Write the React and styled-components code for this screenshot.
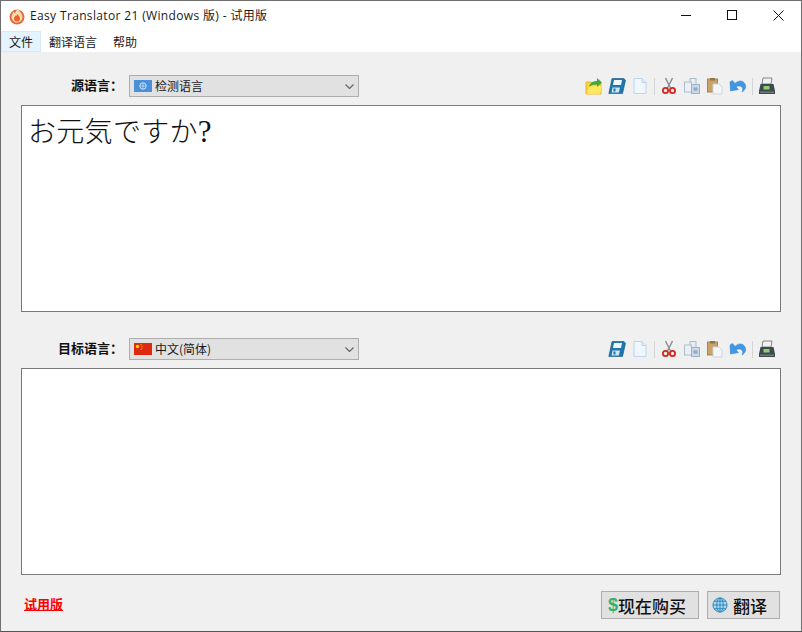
import React from "react";
import styled, { createGlobalStyle } from "styled-components";

const Global = createGlobalStyle`
  html, body { margin: 0; padding: 0; background: #f0f0f0; }
  * { box-sizing: border-box; }
`;
const UI = `"Noto Sans CJK SC", "Noto Sans", sans-serif`;

const Win = styled.div`
  width: 802px; height: 632px; display: flex; flex-direction: column;
  background: #f0f0f0; border: 1px solid #6f6f6f; border-bottom-color: #555; font-family: ${UI}; color: #111; overflow: hidden;
`;
const TitleBar = styled.div`
  height: 30px; flex: none; background: #fff; display: flex; align-items: center; padding-left: 8px;
`;
const TitleText = styled.div`
  margin-left: 5px; font: 12px/16px "Open Sans", "Noto Sans CJK SC", sans-serif; color: #1a1a1a; letter-spacing: 0.35px;
`;
const WinButtons = styled.div`
  margin-left: auto; display: flex; height: 100%;
`;
const WinBtn = styled.div`
  width: 46px; display: flex; align-items: center; justify-content: center; padding-bottom: 2px;
`;
const MenuBar = styled.div`
  height: 21px; flex: none; background: #fff; display: flex; font-size: 12px; line-height: 21px;
`;
const MenuItem = styled.div`
  padding: 0 8px; color: #1a1a1a;
  background: ${p => p.$active ? "#e5f3ff" : "transparent"};
  box-shadow: ${p => p.$active ? "inset 0 0 0 1px #d5e9f9" : "none"};
`;
const Content = styled.div`
  flex: 1; display: flex; flex-direction: column; padding: 23px 20px 0;
`;
const LangRow = styled.div`
  height: 22px; display: flex; align-items: center;
`;
const Label = styled.div`
  width: 102px; text-align: right; font-size: 13px; line-height: 20px; padding-bottom: 2px; font-weight: 700; color: #111;
`;
const Select = styled.div`
  margin-left: 6px; width: 230px; height: 22px; background: #e1e1e1; border: 1px solid #adadad;
  display: flex; align-items: center; padding: 0 4px; font-size: 12px; color: #1a1a1a;
`;
const SelectText = styled.span`
  margin-left: 3px; line-height: 20px;
`;
const Chevron = styled.svg`
  margin-left: auto;
`;
const Tools = styled.div`
  margin-left: auto; display: flex; align-items: center; gap: 5px; height: 22px; padding-right: 5px;
`;
const Sep = styled.div`
  width: 1px; height: 17px; background: #d4d4d4;
`;
const Editor = styled.div`
  margin-top: 8px; height: 207px; background: #fff; border: 1px solid #7a7a7a;
  padding: 4px 6px; font: 300 28px/40px "Noto Sans CJK JP", serif; letter-spacing: 0.3px; color: #111;
`;
const Question = styled.span`
  font: 400 31px/40px "Liberation Serif", serif;
`;
const Spaced = styled.div`
  height: 26px;
`;
const Footer = styled.div`
  margin-top: 16px; height: 28px; display: flex; align-items: center;
`;
const Trial = styled.a`
  margin: -3px 0 0 3px; color: #f00; font-size: 13px; font-weight: 700; text-decoration: underline;
`;
const Btns = styled.div`
  margin-left: auto; margin-right: 1px; display: flex; gap: 8px;
`;
const Btn = styled.div`
  height: 28px; width: ${p => p.$w}px; background: #e1e1e1; border: 1px solid #adadad; display: flex;
  align-items: center; padding-left: ${p => p.$pl}px; gap: ${p => p.$gap}px; font-size: 17px; font-weight: 500; color: #111;
`;
const Dollar = styled.span`
  color: #2db37a; font: 700 18px/1 "Liberation Sans", sans-serif; margin-left: 2px;
`;

const FireIcon = () => (
  <svg width="16" height="17" viewBox="0 0 16 17">
    <circle cx="8" cy="9" r="7.500" fill="#e8673c" />
    <path d="M9 .5c.5 2.500 4.500 4.500 4.500 8.500a5.500 5.500 0 0 1-11 0c0-2.500 1.500-3.500 2-5.500.5 1 1 1.500 1.500 1.500C6.500 3.500 8 2 9 .5z" fill="#fbdcae" />
    <path d="M8.500 6c.5 1.500 2.500 2.500 2.500 4.500a3 3 0 0 1-6 0c0-1.500 1-2 1.500-3 .5.500 1 .5 2-1.500z" fill="#e9622f" />
  </svg>
);

const UNFlag = () => (
  <svg width="18" height="12" viewBox="0 0 18 12">
    <rect width="18" height="12" fill="#4a90d9" />
    <circle cx="9" cy="6" r="3.200" fill="none" stroke="#cfe3f7" strokeWidth="1" />
    <path d="M9 3v6M6 6h6" stroke="#cfe3f7" strokeWidth=".7" />
  </svg>
);
const CNFlag = () => (
  <svg width="18" height="12" viewBox="0 0 18 12">
    <rect width="18" height="12" fill="#de2910" />
    <circle cx="3.500" cy="3.500" r="1.700" fill="#ffde00" />
    <circle cx="7" cy="1.500" r=".6" fill="#ffde00" />
    <circle cx="8" cy="3" r=".6" fill="#ffde00" />
    <circle cx="8" cy="5" r=".6" fill="#ffde00" />
    <circle cx="7" cy="6.500" r=".6" fill="#ffde00" />
  </svg>
);
const ChevronIcon = () => (
  <Chevron width="9" height="5" viewBox="0 0 9 5">
    <path d="M.5.500 4.500 4.500 8.500.500" fill="none" stroke="#666" strokeWidth="1.200" />
  </Chevron>
);

const Open = () => (
  <svg width="18" height="18" viewBox="0 0 18 18">
    <path d="M1 5h5l1 1h9v11H1z" fill="#f8d340" stroke="#e9b62e" />
    <path d="M2 17l2-8h13l-2 8z" fill="#ffe75e" />
    <path d="M4 10c1-4 4-6 8-6V1l5 4.500-5 4.500V7.500c-3 0-6 .8-8 2.500z" fill="#45a83a" />
  </svg>
);
const Save = () => (
  <svg width="18" height="18" viewBox="0 0 18 18">
    <path d="M4 1.500h12l1.500 2-3 13H.8z" fill="#1f76ad" stroke="#125682" strokeWidth=".6" />
    <path d="M6 3h8l-1 5H5z" fill="#f0f7fc" />
    <path d="M4.500 10.500h7.500l-1.200 5H3.500z" fill="#cfe6f5" />
    <rect x="5.500" y="11.500" width="2" height="3" fill="#1f76ad" />
  </svg>
);
const NewDoc = () => (
  <svg width="18" height="18" viewBox="0 0 18 18">
    <path d="M3 1.500h8l4 4v11H3z" fill="#f0f6fd" stroke="#bcd4ee" />
    <path d="M11 1.500v4h4" fill="#dce9f7" stroke="#bcd4ee" />
  </svg>
);
const Cut = () => (
  <svg width="18" height="18" viewBox="0 0 18 18">
    <path d="M5.500 1l5 10M12.500 1l-5 10" stroke="#8a8f94" strokeWidth="1.500" />
    <circle cx="5.500" cy="13.500" r="2.600" fill="none" stroke="#d3261c" strokeWidth="1.800" />
    <circle cx="12.500" cy="13.500" r="2.600" fill="none" stroke="#d3261c" strokeWidth="1.800" />
  </svg>
);
const Copy = () => (
  <svg width="18" height="18" viewBox="0 0 18 18">
    <rect x="7" y="1.500" width="6" height="8" fill="#e6edf4" stroke="#aebdcb" />
    <rect x="1.500" y="5" width="7" height="10" fill="#eaf0f6" stroke="#aebdcb" />
    <rect x="8.500" y="7.500" width="8" height="9" fill="#c8d8e6" stroke="#9fb2c4" />
    <rect x="10.500" y="10.500" width="4" height="3" fill="#8ea9c0" />
  </svg>
);
const Paste = () => (
  <svg width="18" height="18" viewBox="0 0 18 18">
    <rect x="1.500" y="2" width="10" height="13" fill="#c8a468" stroke="#a88548" />
    <rect x="4" y="1" width="5" height="2.500" fill="#8b7752" />
    <path d="M7 7h6l3 3v7H7z" fill="#f4f7fa" stroke="#cdd6df" />
  </svg>
);
const Undo = () => (
  <svg width="18" height="18" viewBox="0 0 18 18">
    <path d="M1 5l.5 9 8-1.500-2.500-2.500c2-1.500 5-1.500 6.500 1 .5 1 .3 2.500-.5 4 3-1.500 4.500-5 3-8C14 3 9.500 3 6 6.500L3.500 3.500z" fill="#3f97e6" stroke="#2a7cc7" strokeWidth=".5" />
  </svg>
);
const Fax = () => (
  <svg width="18" height="18" viewBox="0 0 18 18">
    <path d="M5 1h9l-1 6H4z" fill="#f2f2f2" stroke="#6a6a6a" strokeWidth=".8" />
    <path d="M1 14l1.500-7h13l1.500 7v3H1z" fill="#3d4a4f" />
    <rect x="5.500" y="9" width="6" height="3.500" fill="#8fd06a" />
    <rect x="2" y="14.500" width="14" height="1.500" fill="#6d7b80" />
  </svg>
);
const Globe = () => (
  <svg width="16" height="16" viewBox="0 0 17 17" fill="none" stroke="#1f7fb5" strokeWidth=".9">
    <circle cx="8.500" cy="8.500" r="7.500" fill="#a9d6ee" />
    <ellipse cx="8.500" cy="8.500" rx="3.500" ry="7.500" />
    <path d="M1 8.500h15M2.200 4.500h12.600M2.200 12.500h12.600M8.500 1v15" />
  </svg>
);

const Toolbar = ({ open }) => (
  <Tools>
    {open && <Open />}
    <Save /><NewDoc /><Sep /><Cut /><Copy /><Paste /><Undo /><Sep /><Fax />
  </Tools>
);

export default function App() {
  return (
    <Win>
      <Global />
      <TitleBar>
        <FireIcon />
        <TitleText>Easy Translator 21 (Windows 版) - 试用版</TitleText>
        <WinButtons>
          <WinBtn><svg width="11" height="11" viewBox="0 0 11 11"><path d="M0 5.500h10" stroke="#111" /></svg></WinBtn>
          <WinBtn><svg width="11" height="11" viewBox="0 0 11 11"><rect x=".5" y=".5" width="9" height="9" fill="none" stroke="#111" /></svg></WinBtn>
          <WinBtn><svg width="11" height="11" viewBox="0 0 11 11"><path d="M.5.500l10 10M10.500.500l-10 10" stroke="#111" /></svg></WinBtn>
        </WinButtons>
      </TitleBar>
      <MenuBar>
        <MenuItem $active>文件</MenuItem>
        <MenuItem>翻译语言</MenuItem>
        <MenuItem>帮助</MenuItem>
      </MenuBar>
      <Content>
        <LangRow>
          <Label>源语言：</Label>
          <Select><UNFlag /><SelectText>检测语言</SelectText><ChevronIcon /></Select>
          <Toolbar open />
        </LangRow>
        <Editor>お元気ですか<Question>?</Question></Editor>
        <Spaced />
        <LangRow>
          <Label>目标语言：</Label>
          <Select><CNFlag /><SelectText>中文(简体)</SelectText><ChevronIcon /></Select>
          <Toolbar />
        </LangRow>
        <Editor />
        <Footer>
          <Trial>试用版</Trial>
          <Btns>
            <Btn $w={98} $pl={4} $gap={0}><Dollar>$</Dollar>现在购买</Btn>
            <Btn $w={73} $pl={4} $gap={5}><Globe />翻译</Btn>
          </Btns>
        </Footer>
      </Content>
    </Win>
  );
}
